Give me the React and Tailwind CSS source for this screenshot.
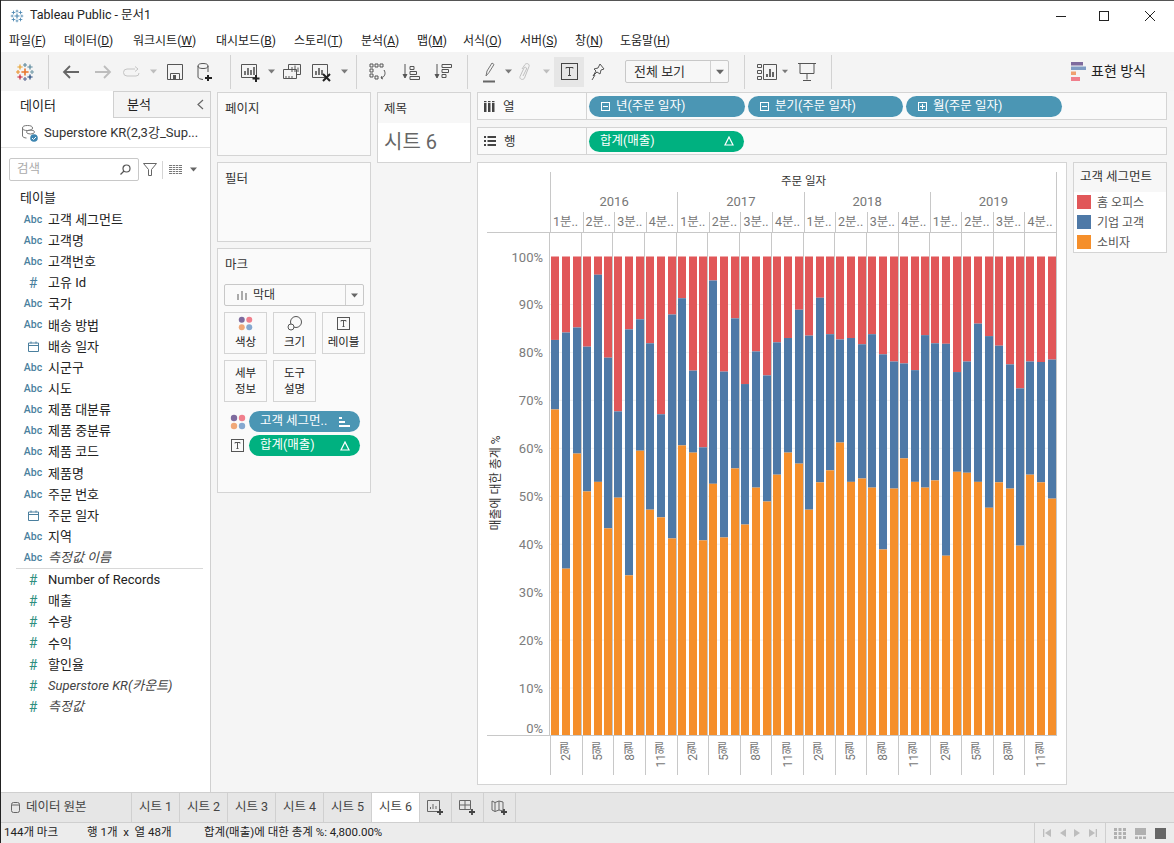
import React from "react";

const F = { fontFamily: 'Roboto,"Noto Sans CJK KR",sans-serif' };

const XS = [551,562,573,583,594,604,614,625,636,646,657,668,678,689,699,709,720,731,741,752,763,773,784,795,805,816,826,836,847,858,868,879,890,900,911,921,931,942,953,963,974,985,995,1006,1016,1026,1037,1048];
const BLUE = [82.6,84.15,85.2,81.2,96.2,78.9,67.7,84.8,86.9,81.9,67.1,87.9,91.3,76.2,60.2,95,76,87.1,73.4,80.2,75.2,82.1,83,88.9,83.5,91.4,83.8,82.7,83,81.7,83.8,79.6,78.1,77.7,76.3,83.6,81.9,81.8,75.9,78.1,86,83.4,81.4,77.5,72.5,78.1,78,78.5];
const ORANGE = [68.1,34.9,58.9,51,53,43.3,49.7,33.5,59.5,47.2,45.6,41.2,60.6,59.1,40.8,52.6,41.4,55.8,44.1,51.8,48.9,54.5,59.1,56.8,47.2,52.9,55.4,61.2,53,53.7,51.8,38.9,51.6,57.9,53,51.8,53.3,37.6,55.1,54.9,53,47.6,52.9,51.6,39.7,54.5,52.9,49.5];

const Plus = ({ x, y, s = 3, c, w = 1.4 }) => (
  <path d={`M${x - s} ${y}H${x + s}M${x} ${y - s}V${y + s}`} stroke={c} strokeWidth={w} fill="none" />
);

const Logo = ({ size = 20, mono }) => {
  const c = (v) => mono || v;
  return (
    <svg width={size} height={size} viewBox="0 0 20 20">
      <Plus x={10} y={10} s={3.6} c={c("#e8762d")} w={1.6} />
      <Plus x={10} y={3} s={2} c={c("#5b879b")} w={1.1} />
      <Plus x={10} y={17} s={2} c={c("#5b6591")} w={1.1} />
      <Plus x={3} y={10} s={2} c={c("#eb912b")} w={1.1} />
      <Plus x={17} y={10} s={2} c={c("#7099a6")} w={1.1} />
      <Plus x={5} y={5} s={2.6} c={c("#e8a12d")} w={1.2} />
      <Plus x={15} y={5} s={2.6} c={c("#59879b")} w={1.2} />
      <Plus x={5} y={15} s={2.6} c={c("#c72035")} w={1.2} />
      <Plus x={15} y={15} s={2.6} c={c("#1f447a")} w={1.2} />
    </svg>
  );
};

const Caret = ({ c = "#7a7a7a", s = 5 }) => (
  <svg width={s + 2} height={s} viewBox="0 0 7 5"><path d="M0 .5h7L3.5 4.5z" fill={c} /></svg>
);

const Tb = ({ w, children, cls = "" }) => (
  <div className={`flex items-center justify-center shrink-0 h-[30px] ${cls}`} style={{ width: w }}>{children}</div>
);
const Gap = ({ w }) => <div className="shrink-0" style={{ width: w }} />;
const Sep = () => <div className="shrink-0 w-px h-[34px] bg-[#d2d2d2]" />;

const Svg = ({ w = 20, h = 20, children, vb }) => (
  <svg width={w} height={h} viewBox={vb || `0 0 ${w} ${h}`} fill="none" stroke="#555" strokeWidth="1">{children}</svg>
);

const MENU = [["파일","F",55],["데이터","D",69],["워크시트","W",83],["대시보드","B",78],["스토리","T",67],["분석","A",56],["맵","M",46],["서식","O",57],["서버","S",55],["창","N",45],["도움말","H",60]];

const Toolbar = () => (
  <div className="h-[39px] bg-[#f4f4f4] flex items-center shrink-0">
    <Tb w={47}><Logo size={20} /></Tb>
    <Sep />
    <Gap w={6} />
    <Tb w={32}><Svg w={18} h={14}><path d="M17 7H2M8 1L2 7l6 6" stroke="#666" strokeWidth="1.8" /></Svg></Tb>
    <Tb w={32}><Svg w={18} h={14}><path d="M1 7h15M10 1l6 6-6 6" stroke="#bdbdbd" strokeWidth="1.8" /></Svg></Tb>
    <Tb w={26}><Svg w={20} h={12}><path d="M13 3H5a3 3 0 000 7h9a3 3 0 003-3M13 .5L16 3l-3 2.5" stroke="#c4c4c4" /></Svg></Tb>
    <Tb w={16}><Caret c="#bdbdbd" /></Tb>
    <Tb w={28}><Svg w={16} h={16}><path d="M.5.5h15v15H.5zM3.5 15.5v-6h9v6" stroke="#555" /><rect x="6" y="11" width="3" height="4" fill="#555" stroke="none" /></Svg></Tb>
    <Tb w={34}><Svg w={20} h={20}><ellipse cx="7" cy="4" rx="5" ry="2.5" /><path d="M2 4v11c0 1.2 2 2.2 5 2.5M12 4v6" /><path d="M12 13v6M9 16h7" stroke="#222" strokeWidth="2" /></Svg></Tb>
    <Gap w={7} />
    <Sep />
    <Gap w={4} />
    <Tb w={32}><Svg w={20} h={20}><path d="M.5 2.5h15v13H.5z" /><path d="M4 13V9M7 13V6M10 13V8M13 13V5" strokeWidth="1.6" /><path d="M15 13v7M11.5 16.5h7" stroke="#222" strokeWidth="2" /></Svg></Tb>
    <Tb w={8}><Caret /></Tb>
    <Tb w={34}><Svg w={18} h={16}><path d="M5.500 5.500V.5h12v10h-4M.5 5.500h13v9H.5z" /><path d="M9 8V3M12 8V1.500M15 8V3.500" /><path d="M3 14v-2M6 14v-2M9 14v-2" /></Svg></Tb>
    <Tb w={26}><Svg w={20} h={20}><path d="M.5 2.500h15v13H.5z" /><path d="M4 13V9M7 13V6M10 13V8" strokeWidth="1.6" /><path d="M11 12l7 7M18 12l-7 7" stroke="#222" strokeWidth="2" /></Svg></Tb>
    <Tb w={18}><Caret /></Tb>
    <Gap w={3} />
    <Sep />
    <Tb w={42}><Svg w={18} h={18}><path d="M1 1h3v3H1zM6 1h3v3H6zM11 1h3v3h-3zM1 6h3v3H1zM1 11h3v3H1zM6 13h3v3H6z" /><path d="M15 7c2 3 1 7-3 8M13 13l-1 2 2 1" /></Svg></Tb>
    <Tb w={24}><Svg w={18} h={18}><path d="M3 1v13M1 11l2 4 2-4" stroke="#555" fill="#555" /><path d="M8 3.500h4v3H8zM8 8.500h6.500v3H8zM8 13.500h9.500v3H8z" /></Svg></Tb>
    <Tb w={40}><Svg w={18} h={18}><path d="M3 1v13M1 11l2 4 2-4" stroke="#555" fill="#555" /><path d="M8 1.500h9.500v3H8zM8 6.500h6.500v3H8zM8 11.500h4v3H8z" /></Svg></Tb>
    <Gap w={4} />
    <Sep />
    <Gap w={6} />
    <Tb w={30}><Svg w={12} h={22}><path d="M3 15l1-5 5-8 2 1.500-5 8z" stroke="#777" /><path d="M0 20.500h12" stroke="#666" strokeWidth="2" /></Svg></Tb>
    <Tb w={8}><Caret /></Tb>
    <Tb w={26}><Svg w={14} h={20}><path d="M4 7l3-4.500c1.500-2 5-.5 4 2L6.500 16c-1 2.500-5.500 1.500-4.500-1.500L6 6c.8-1.500 3-.7 2.500 1L5 14" stroke="#c0c0c0" /></Svg></Tb>
    <Tb w={16}><Caret c="#bdbdbd" /></Tb>
    <Tb w={30} cls="bg-[#e6e6e6]"><Svg w={17} h={17}><rect x=".5" y=".5" width="16" height="16" stroke="#444" /><path d="M5 5.500V4.500h7v1M8.500 4.500v8M7 12.500h3" stroke="#444" /></Svg></Tb>
    <Tb w={28}><Svg w={14} h={18}><path d="M9 1l4 5-3 1-1 4-3-2-4 4 3-5-2-2 4-1z" stroke="#555" /><path d="M1 17l3-5" stroke="#555" /></Svg></Tb>
    <Gap w={13} />
    <div className="w-[104px] h-[23px] shrink-0 border border-[#c8c8c8] rounded-[2px] flex items-center text-[13px] text-[#333] bg-[#f7f7f7]">
      <span className="flex-1 pl-2 whitespace-nowrap">전체 보기</span>
      <div className="w-[18px] h-full border-l border-[#d0d0d0] flex items-center justify-center"><Caret c="#666" s={6} /></div>
    </div>
    <Gap w={15} />
    <Sep />
    <Gap w={7} />
    <Tb w={30}><Svg w={20} h={18}><path d="M.5 1.500h4v3h-4zM.5 7.500h4v3h-4zM.5 13.500h4v3h-4zM6.500 1.500h13v15h-13z" /><path d="M10 14v-3M13 14V6M16 14V9" strokeWidth="1.800" /></Svg></Tb>
    <Tb w={6}><Caret /></Tb>
    <Tb w={38}><Svg w={18} h={20}><path d="M0 1.500h18M2 1.500v10h14v-10M9 11.500v6M5 18.500h8" stroke="#555" /></Svg></Tb>
    <Gap w={5} />
    <Sep />
    <div className="ml-auto pr-[28px] flex items-center gap-[5px] text-[14px] text-[#222]">
      <svg width="15" height="20" viewBox="0 0 15 20">
        <rect y="0" width="12" height="3.500" fill="#7e6b9e" /><rect y="4.500" width="15" height="3.500" fill="#7f9cc4" /><rect y="9.500" width="5" height="3.500" fill="#f0a070" /><rect y="15" width="9" height="4" fill="#f07f8c" />
      </svg>
      <span className="whitespace-nowrap">표현 방식</span>
    </div>
  </div>
);

const Abc = () => <span className="text-[10.5px] text-[#4a7f9e] font-medium">Abc</span>;
const Hash = ({ c = "#4a7f9e" }) => <span className="text-[14px] leading-none" style={{ color: c }}>#</span>;
const Cal = () => (
  <svg width="11" height="11" viewBox="0 0 11 11" fill="none" stroke="#4a7f9e"><path d="M.5 2h10v8.500H.5zM.5 4.500h10M3 .5v2M8 .5v2" /></svg>
);

const DIMS = [["a","고객 세그먼트"],["a","고객명"],["a","고객번호"],["h","고유 Id"],["a","국가"],["a","배송 방법"],["c","배송 일자"],["a","시군구"],["a","시도"],["a","제품 대분류"],["a","제품 중분류"],["a","제품 코드"],["a","제품명"],["a","주문 번호"],["c","주문 일자"],["a","지역"],["a","측정값 이름",1]];
const MEAS = [["Number of Records"],["매출"],["수량"],["수익"],["할인율"],["Superstore KR(카운트)",1],["측정값",1]];

const Field = ({ icon, children, italic }) => (
  <div className={`h-[21.15px] flex items-center text-[13px] text-[#222] whitespace-nowrap ${italic ? "italic text-[#444]" : ""}`}>
    <div className="w-[47px] pl-[21px] pr-[4px] flex justify-center shrink-0 not-italic">{icon}</div>
    <span>{children}</span>
  </div>
);

const Sidebar = () => (
  <div className="w-[210px] shrink-0 bg-white border-r border-[#d0d0d0] flex flex-col">
    <div className="h-[27px] flex text-[13px] text-[#222] shrink-0">
      <div className="w-[112px] pl-[19px] flex items-center pt-[2px]">데이터</div>
      <div className="flex-1 bg-[#f4f4f4] border-l border-b border-t border-[#d0d0d0] pl-[13px] flex items-center justify-between pr-[6px]">
        <span>분석</span>
        <svg width="7" height="11" viewBox="0 0 7 11" fill="none" stroke="#666" strokeWidth="1.200"><path d="M6 1L1 5.500 6 10" /></svg>
      </div>
    </div>
    <div className="h-[30px] border-b border-[#e2e2e2] flex items-center pl-[20px] gap-[5px] text-[13px] text-[#333] whitespace-nowrap shrink-0">
      <svg width="18" height="18" viewBox="0 0 18 18" fill="none" stroke="#777"><ellipse cx="6.500" cy="4" rx="5" ry="2.500" /><path d="M1.500 4v8c0 1 2 2 4 2" /><ellipse cx="9.500" cy="8" rx="4" ry="2" /><circle cx="13" cy="14" r="3.800" fill="#3d85b0" stroke="none" /><path d="M11 14l1.500 1.500L15 13" stroke="#fff" /></svg>
      <span>Superstore KR(2,3강_Sup...</span>
    </div>
    <div className="h-[39px] flex items-center pl-[8px] shrink-0 pt-[4px]">
      <div className="w-[130px] h-[23px] border border-[#c8c8c8] rounded-[2px] flex items-center justify-between px-[7px] text-[12.5px] text-[#aaa]">
        <span>검색</span>
        <svg width="11" height="11" viewBox="0 0 11 11" fill="none" stroke="#555" strokeWidth="1.200"><circle cx="6.500" cy="4.500" r="3.500" /><path d="M4 7l-3.500 3.500" /></svg>
      </div>
      <svg className="ml-[4px]" width="14" height="13" viewBox="0 0 14 13" fill="none" stroke="#666"><path d="M.5.500h13L8.500 6.500v6h-3v-6z" /></svg>
      <div className="w-px h-[18px] bg-[#d5d5d5] ml-[5px]" />
      <svg className="ml-[6px]" width="13" height="9" viewBox="0 0 13 9" stroke="#777"><path d="M0 .500h13M0 2.500h13M0 4.500h13M0 6.500h13M0 8.500h13" /><path d="M3.500 0v9M6.500 0v9M9.500 0v9" stroke="#fff" strokeWidth=".7" /></svg>
      <div className="ml-[8px]"><Caret c="#666" s={5} /></div>
    </div>
    <div className="h-[22px] pl-[19px] flex items-center text-[13px] text-[#222] shrink-0">테이블</div>
    {DIMS.map(([t, n, it]) => (
      <Field key={n} italic={it} icon={t === "a" ? <Abc /> : t === "h" ? <Hash /> : <Cal />}>{n}</Field>
    ))}
    <div className="border-t border-[#d8d8d8] ml-[15px] mr-[7px]" />
    {MEAS.map(([n, it]) => (
      <Field key={n} italic={it} icon={<Hash c="#2f8f7f" />}>{n}</Field>
    ))}
  </div>
);

const Dots = ({ s = 16 }) => (
  <svg width={s} height={s} viewBox="0 0 16 16">
    <circle cx="4" cy="4" r="3.200" fill="#7e6b9e" /><circle cx="12" cy="4" r="3.200" fill="#f07f8c" />
    <circle cx="4" cy="12" r="3.200" fill="#f0a878" /><circle cx="12" cy="12" r="3.200" fill="#85a8d0" />
  </svg>
);
const TBox = ({ s = 13 }) => (
  <svg width={s} height={s} viewBox="0 0 13 13" fill="none" stroke="#555"><rect x=".5" y=".5" width="12" height="12" /><path d="M4 4.500V3.500h5v1M6.500 3.500v6M5.500 9.500h2" /></svg>
);

const MarkBtn = ({ children, label }) => (
  <div className="h-[42px] border border-[#d4d4d4] flex flex-col items-center justify-center gap-[1px] text-[11.5px] leading-[15px] text-[#222] bg-[#fafafa] whitespace-nowrap">
    {children && <div className="mb-[3px] h-[15px] flex items-center">{children}</div>}
    {label.map((l) => <span key={l}>{l}</span>)}
  </div>
);

const Card = ({ title, cls = "", children }) => (
  <div className={`border border-[#d4d4d4] bg-[#fafafa] ${cls}`}>
    <div className="text-[12.5px] text-[#333] pl-[7px] pt-[8px] leading-[16px]">{title}</div>
    {children}
  </div>
);

const Pill = ({ color = "bg-[#4b96b4]", w, children, right, left }) => (
  <div className={`h-[21px] rounded-[10.5px] ${color} text-white text-[12.5px] flex items-center pl-[11px] pr-[10px] whitespace-nowrap shrink-0`} style={{ width: w }}>
    {left}
    <span className="flex-1 overflow-hidden">{children}</span>
    {right}
  </div>
);

const Box = ({ sign }) => (
  <svg className="mr-[6px] ml-[1px]" width="9" height="9" viewBox="0 0 9 9" fill="none" stroke="#fff"><rect x=".5" y=".5" width="8" height="8" /><path d={sign === "+" ? "M2 4.500h5M4.500 2v5" : "M2 4.500h5"} /></svg>
);
const Delta = () => (
  <svg width="10" height="10" viewBox="0 0 10 10" fill="none" stroke="#fff" strokeWidth="1.200"><path d="M5 1L9 9H1z" /></svg>
);

const Marks = () => (
  <Card title="마크" cls="h-[245px]">
    <div className="mx-[6px] mt-[11px] h-[22px] border border-[#c8c8c8] rounded-[2px] flex items-center text-[12px] text-[#333]">
      <div className="flex-1 flex items-center pl-[12px] gap-[6px]">
        <svg width="10" height="9" viewBox="0 0 10 9" fill="#aaa"><rect x="0" y="3" width="2" height="6" /><rect x="4" y="0" width="2" height="9" /><rect x="8" y="2" width="2" height="7" /></svg>
        <span>막대</span>
      </div>
      <div className="w-[18px] h-full border-l border-[#d0d0d0] flex items-center justify-center"><Caret c="#666" s={5} /></div>
    </div>
    <div className="mx-[6px] mt-[6px] grid grid-cols-[43px_43px_43px] gap-x-[6px] gap-y-[6px] w-[141px]">
      <MarkBtn label={["색상"]}><Dots s={15} /></MarkBtn>
      <MarkBtn label={["크기"]}><svg width="15" height="15" viewBox="0 0 15 15" fill="none" stroke="#555"><circle cx="9" cy="6" r="5.500" /><circle cx="4" cy="11" r="3" fill="#fafafa" /></svg></MarkBtn>
      <MarkBtn label={["레이블"]}><TBox /></MarkBtn>
      <MarkBtn label={["세부", "정보"]} />
      <MarkBtn label={["도구", "설명"]} />
    </div>
    <div className="mt-[9px] ml-[12px] flex items-center gap-[3px]">
      <Dots s={16} />
      <Pill w={111} right={<svg width="11" height="10" viewBox="0 0 11 10" fill="#fff"><rect y="0" width="3" height="2" /><rect y="4" width="6" height="2" /><rect y="8" width="11" height="2" /></svg>}>고객 세그먼..</Pill>
    </div>
    <div className="mt-[3px] ml-[13px] flex items-center gap-[5px]">
      <TBox />
      <Pill w={111} color="bg-[#00b180]" right={<Delta />}>합계(매출)</Pill>
    </div>
  </Card>
);

const ShelfRow = ({ icon, label, children }) => (
  <div className="h-[28px] border border-[#d4d4d4] bg-[#fafafa] flex items-center shrink-0">
    <div className="w-[109px] h-full border-r border-[#d4d4d4] flex items-center pl-[6px] gap-[8px] text-[12.5px] text-[#333] shrink-0">
      {icon}<span className="pt-[2px]">{label}</span>
    </div>
    <div className="flex items-center gap-[3px] pl-[2px]">{children}</div>
  </div>
);

const Chart = () => {
  const y = (p) => 504 - p * 4.795;
  return (
    <div className="w-[590px] h-[623px] border border-[#d4d4d4] bg-white shrink-0 pl-[9px] pt-[9px]">
      <div className="grid grid-cols-[63px_507px] w-[570px] h-[60px]">
        <div />
        <div className="border-l border-r border-[#c8c8c8] flex flex-col">
          <div className="h-[20px] flex items-center justify-center text-[11.5px] text-[#333]">주문 일자</div>
          <div className="h-[20px] grid grid-cols-4">
            {["2016","2017","2018","2019"].map((yr, i) => (
              <div key={yr} className={`flex items-center justify-center text-[13px] text-[#777] ${i ? "border-l border-[#c8c8c8]" : ""}`}>{yr}</div>
            ))}
          </div>
          <div className="h-[20px] grid grid-cols-16">
            {Array.from({ length: 16 }).map((_, i) => (
              <div key={i} className={`flex items-center pl-[2px] text-[12.5px] text-[#777] whitespace-nowrap overflow-hidden ${i ? "border-l border-[#c8c8c8]" : ""}`}>{(i % 4) + 1}분..</div>
            ))}
          </div>
        </div>
      </div>
      <svg width="570" height="504" viewBox="0 0 570 504" className="block" style={F}>
        <path d="M0 .5H570" stroke="#c8c8c8" />
        {[10,20,30,40,50,60,70,80,90].map((p) => (
          <path key={p} d={`M63 ${y(p)}H570`} stroke="#f0f0f0" />
        ))}
        {Array.from({ length: 17 }).map((_, i) => {
          const x = Math.round(63 + (i * 507) / 16) - 0.5;
          return <path key={i} d={`M${x} 0V504`} stroke="#c8c8c8" />;
        })}
        {XS.map((xx, i) => {
          const x = xx - 487;
          return (
            <g key={i}>
              <rect x={x} y={y(100)} width="8" height={y(BLUE[i]) - y(100)} fill="#e15759" />
              <rect x={x} y={y(BLUE[i])} width="8" height={y(ORANGE[i]) - y(BLUE[i])} fill="#4e79a7" />
              <rect x={x} y={y(ORANGE[i])} width="8" height={y(0) - y(ORANGE[i])} fill="#f58f2b" />
            </g>
          );
        })}
        <path d="M0 503.500H570" stroke="#c8c8c8" />
        {[0,10,20,30,40,50,60,70,80,90,100].map((p) => (
          <text key={p} x="56" y={y(p) + 5 + (p === 0 ? -8 : 0)} textAnchor="end" fontSize="13" fill="#7c7c7c">{p}%</text>
        ))}
        <text transform="translate(13 251) rotate(-90)" textAnchor="middle" fontSize="12" fill="#333">매출에 대한 총계 %</text>
      </svg>
      <div className="ml-[63px] w-[507px] h-[39px] grid grid-cols-16 border-r border-transparent">
        {Array.from({ length: 16 }).map((_, i) => (
          <div key={i} className="border-l border-[#c8c8c8] flex justify-center pt-[6px]">
            <span className="[writing-mode:vertical-rl] rotate-180 text-[12px] leading-[12px] text-[#777] self-start whitespace-nowrap">{[2,5,8,11][i % 4]}월</span>
          </div>
        ))}
      </div>
    </div>
  );
};

const Legend = () => (
  <div className="w-[94px] h-[91px] border border-[#d4d4d4] bg-white shrink-0">
    <div className="h-[29px] bg-[#f7f7f7] flex items-center pl-[6px] text-[12.5px] text-[#333] whitespace-nowrap">고객 세그먼트</div>
    <div className="pl-[3px] pt-[3px] flex flex-col gap-[6px]">
      {[["#e15759","홈 오피스"],["#4e79a7","기업 고객"],["#f58f2b","소비자"]].map(([c, t]) => (
        <div key={t} className="flex items-center gap-[6px] h-[14px] text-[12px] text-[#555] whitespace-nowrap">
          <div className="w-[14px] h-[14px]" style={{ background: c }} />
          <span className="pt-[1px]">{t}</span>
        </div>
      ))}
    </div>
  </div>
);

const Tabs = () => (
  <div className="h-[30px] bg-[#e6e6e6] border-t border-[#cfcfcf] flex shrink-0 text-[12.5px] text-[#444]">
    <div className="w-[131px] flex items-center pl-[10px] gap-[6px] whitespace-nowrap border-r border-[#d0d0d0]">
      <svg width="9" height="11" viewBox="0 0 9 11" fill="none" stroke="#666"><rect x=".5" y=".5" width="8" height="10" rx="2" /><path d="M.5 3h8" /></svg>
      <span>데이터 원본</span>
    </div>
    {[1,2,3,4,5,6].map((n) => (
      <div key={n} className={`w-[48px] flex items-center justify-center whitespace-nowrap border-r border-[#d0d0d0] ${n === 6 ? "bg-white" : ""}`}>시트 {n}</div>
    ))}
    {[
      <g key="a"><path d="M.5.5h12v11H.5z" /><path d="M3.500 9V7M6 9V4M9 9V6" /></g>,
      <g key="b"><path d="M.5.5h11v9H.5zM6 .5v9M.5 5h11" /></g>,
      <g key="c"><path d="M1 1l3 1.500L8 1l4 1v9l-4-1-4 1.500L1 10zM4 2.500v9M8 1v9" /></g>,
    ].map((g, i) => (
      <div key={i} className="w-[32px] flex items-center justify-center border-r border-[#d0d0d0]">
        <svg width="18" height="16" viewBox="0 0 18 16" fill="none" stroke="#666">{g}<path d="M13 9v6M10 12h6" stroke="#444" strokeWidth="1.800" /></svg>
      </div>
    ))}
  </div>
);

const Status = () => (
  <div className="h-[21px] bg-[#ececec] border-t border-[#cfcfcf] flex items-center shrink-0 text-[11.5px] text-[#222] whitespace-nowrap">
    <span className="ml-[3px] w-[83px]">144개 마크</span>
    <span className="w-[117px]">행 1개 &nbsp;x&nbsp; 열 48개</span>
    <span>합계(매출)에 대한 총계 %: 4,800.00%</span>
    <div className="ml-auto h-full flex items-center border-l border-[#cfcfcf]">
      <div className="w-[71px] h-full flex items-center justify-around px-[4px] border-r border-[#cfcfcf]">
        <svg width="8" height="8" viewBox="0 0 8 8" fill="#bdbdbd"><path d="M0 0h1.300v8H0zM8 0v8L2 4z" /></svg>
        <svg width="6" height="8" viewBox="0 0 6 8" fill="#bdbdbd"><path d="M6 0v8L0 4z" /></svg>
        <svg width="6" height="8" viewBox="0 0 6 8" fill="#bdbdbd"><path d="M0 0v8l6-4z" /></svg>
        <svg width="8" height="8" viewBox="0 0 8 8" fill="#bdbdbd"><path d="M0 0v8l6-4zM6.700 0H8v8H6.700z" /></svg>
      </div>
      <div className="w-[68px] flex items-center justify-around px-[3px]">
        <svg width="12" height="11" viewBox="0 0 12 11" fill="#b0b0b0"><path d="M0 0h3v3H0zM4.500 0h3v3h-3zM9 0h3v3H9zM0 4h3v3H0zM4.500 4h3v3h-3zM9 4h3v3H9zM0 8h3v3H0zM4.500 8h3v3h-3zM9 8h3v3H9z" /></svg>
        <svg width="11" height="11" viewBox="0 0 11 11" fill="#b0b0b0"><path d="M0 0h11v7H0zM0 8.500h3V11H0zM4 8.500h3V11H4zM8 8.500h3V11H8z" /></svg>
        <div className="w-[11px] h-[11px] bg-[#666]" />
      </div>
    </div>
  </div>
);

export default function App() {
  return (
    <div className="w-[1174px] h-[843px] bg-[#f5f5f5] border-l border-[#222] border-t-0 flex flex-col overflow-hidden" style={F}>
      <div className="h-[30px] bg-white border-t border-[#555] flex items-center shrink-0">
        <div className="ml-[9px] mr-[6px]"><Logo size={14} mono="#4a86b0" /></div>
        <span className="text-[12.5px] text-[#222] whitespace-nowrap">Tableau Public - 문서1</span>
        <div className="ml-auto flex items-center text-[#222]">
          <svg className="mr-[33px]" width="10" height="10" viewBox="0 0 10 10" stroke="#222"><path d="M0 5.500h10" /></svg>
          <svg className="mr-[36px]" width="10" height="10" viewBox="0 0 10 10" fill="none" stroke="#222"><rect x=".5" y=".5" width="9" height="9" /></svg>
          <svg className="mr-[19px]" width="10" height="10" viewBox="0 0 10 10" stroke="#222"><path d="M0 0l10 10M10 0L0 10" /></svg>
        </div>
      </div>
      <div className="h-[22px] bg-white flex items-center pl-[8px] text-[12px] text-[#222] shrink-0">
        {MENU.map(([n, k, w]) => (
          <div key={n} className="whitespace-nowrap shrink-0" style={{ width: w }}>{n}(<span className="underline">{k}</span>)</div>
        ))}
      </div>
      <Toolbar />
      <div className="flex-1 min-h-0 flex">
        <Sidebar />
        <div className="pl-[6px] pr-[6px] pt-[1px] w-[166px] shrink-0 flex flex-col gap-[6px]">
          <Card title="페이지" cls="h-[64px]" />
          <Card title="필터" cls="h-[80px]" />
          <Marks />
        </div>
        <div className="pt-[1px] w-[100px] shrink-0">
          <div className="w-[94px] h-[71px] border border-[#d4d4d4] bg-white">
            <div className="h-[30px] bg-[#f7f7f7] pl-[6px] pt-[8px] text-[12.5px] leading-[16px] text-[#333]">제목</div>
            <div className="pl-[6px] pt-[6px] text-[20px] leading-[26px] text-[#666] whitespace-nowrap">시트 6</div>
          </div>
        </div>
        <div className="pt-[1px] w-[690px] flex flex-col">
          <ShelfRow label="열" icon={<svg width="11" height="11" viewBox="0 0 11 11" fill="#444"><rect x="0" y="2" width="2.500" height="9" /><rect x="4" y="2" width="2.500" height="9" /><rect x="8" y="2" width="2.500" height="9" /><rect x="0" y="0" width="2.500" height="1.200" /><rect x="4" y="0" width="2.500" height="1.200" /><rect x="8" y="0" width="2.500" height="1.200" /></svg>}>
            <Pill w={156} left={<Box sign="-" />}>년(주문 일자)</Pill>
            <Pill w={155} left={<Box sign="-" />}>분기(주문 일자)</Pill>
            <Pill w={156} left={<Box sign="+" />}>월(주문 일자)</Pill>
          </ShelfRow>
          <div className="h-[7px] shrink-0" />
          <ShelfRow label="행" icon={<svg width="12" height="10" viewBox="0 0 12 10" fill="#444"><path d="M0 0h2v2H0zM3.500 0H12v2H3.500zM0 4h2v2H0zM3.500 4H12v2H3.500zM0 8h2v2H0zM3.500 8H12v2H3.500z" /></svg>}>
            <Pill w={155} color="bg-[#00b180]" right={<Delta />}>합계(매출)</Pill>
          </ShelfRow>
          <div className="h-[7px] shrink-0" />
          <div className="flex gap-[6px] items-start">
            <Chart />
            <Legend />
          </div>
        </div>
      </div>
      <Tabs />
      <Status />
    </div>
  );
}
